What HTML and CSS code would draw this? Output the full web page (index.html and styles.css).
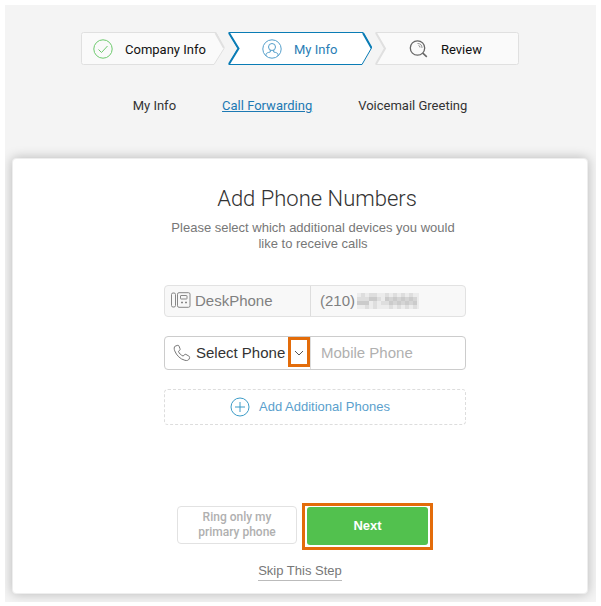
FILE: index.html
```html
<!DOCTYPE html>
<html lang="en">
  <head>
    <meta charset="UTF-8" />
    <meta name="viewport" content="width=device-width, initial-scale=1.0" />
    <title>Add Phone Numbers</title>
    <link rel="stylesheet" href="styles.css">
  </head>
  <body>
    <div class="page">
      <header class="header">
        <ol class="steps">
          <li class="step step-first">
            <svg class="step-shape" viewBox="0 0 144 33" preserveAspectRatio="none">
              <path d="M135 .5H2.500Q.5 .5 .5 2.500V30.500Q.5 32.500 2.500 32.500H133L143 16.500Z" />
              <path class="edge" d="M134.500 1L143 16" />
            </svg>
            <svg class="step-icon green" viewBox="0 0 20 20">
              <circle cx="10" cy="10" r="9.200" />
              <path d="M5.500 10.500l3 3 6-6.500" />
            </svg>
            <span>Company Info</span>
          </li>
          <li class="step step-active">
            <svg class="step-shape" viewBox="0 0 144 33" preserveAspectRatio="none">
              <path d="M.8 .5H135L143.500 16 134 32.500H.8L10 16.500Z" />
              <path class="edge" d="M1 1l9.500 15.500L1 32M135 1l8.500 15" />
            </svg>
            <svg class="step-icon blue" viewBox="0 0 20 20">
              <circle cx="10" cy="10" r="9.200" />
              <circle cx="10" cy="8" r="3.500" />
              <path d="M4 17v-1.500c0-1.500 2-2 4.300-2.500v-2M16 17v-1.500c0-1.500-2-2-4.300-2.500v-2" />
            </svg>
            <span>My Info</span>
          </li>
          <li class="step step-last">
            <svg class="step-shape" viewBox="0 0 144 33" preserveAspectRatio="none">
              <path d="M.8 .5H141.500Q143.500 .5 143.500 2.500V30.500Q143.500 32.500 141.500 32.500H.8L10 16.500Z" />
              <path class="edge" d="M1 1l9 15.500L1 32" />
            </svg>
            <svg class="step-icon dark" viewBox="0 0 20 20">
              <circle cx="8.500" cy="9" r="7.200" stroke-width="1.300" />
              <path d="M8.500 4.500c3 0 4.500 1.500 4.500 4.500M9.500 6.500q1.500 0 1.500 2" stroke-width=".7" />
              <path d="M13.800 14.200l4 3.600" stroke-width="1.600" />
            </svg>
            <span>Review</span>
          </li>
        </ol>
        <nav class="tabs">
          <a href="#my-info">My Info</a>
          <a class="current" href="#call-forwarding">Call Forwarding</a>
          <a href="#voicemail">Voicemail Greeting</a>
        </nav>
      </header>

      <main class="card">
        <form action="/">
          <div class="fields">
            <h1>Add Phone Numbers</h1>
            <p class="intro">Please select which additional devices you would like to receive calls</p>
            <div class="row row-desk">
              <div class="device">
                <svg class="desk-icon" viewBox="0 0 20 16">
                  <rect x=".5" y="1" width="4" height="14" rx="1.500" />
                  <rect x="6.500" y=".7" width="12.500" height="14.600" rx="1.500" />
                  <rect x="9.500" y="3.500" width="6.500" height="3.500" rx=".5" />
                  <path d="M10 10.500h2M14 10.500h2" stroke-width="1.500" />
                </svg>
                <span>DeskPhone</span>
              </div>
              <div class="number">
                <span>(210)</span>
                <svg class="masked" viewBox="0 0 62 16" shape-rendering="crispEdges" role="img" aria-label="Hidden number">
                  <path fill="#ececec" d="M0 0h62v16H0z" />
                  <path fill="#dedede" d="M4 0h4v4H4zM12 0h8v4h-8zM28 0h4v4h-4zM36 0h4v4h-4zM44 0h4v4h-4zM52 0h4v4h-4zM0 4h12v4H0zM20 4h4v4h-4zM8 12h4v4H8zM16 12h4v4h-4zM32 12h4v4h-4zM40 12h4v4h-4zM48 12h4v4h-4zM56 12h4v4h-4zM24 8h8v4h-8zM16 8h4v4h-4z" />
                  <path fill="#cbcbcb" d="M4 8h8v4H4zM12 4h8v4h-8zM28 4h4v4h-4zM32 8h4v4h-4zM36 4h4v4h-4zM40 8h4v4h-4zM44 4h4v4h-4zM48 8h4v4h-4zM52 4h4v4h-4zM56 8h4v4h-4zM0 8h4v4H0z" />
                  <path fill="#d5d5d5" d="M32 4h4v4h-4zM40 4h4v4h-4zM48 4h4v4h-4zM56 4h4v4h-4zM36 8h4v4h-4zM44 8h4v4h-4zM52 8h4v4h-4z" />
                </svg>
              </div>
            </div>

            <div class="row row-select">
              <div class="device">
                <svg class="phone-icon" viewBox="0 0 18 18">
                  <path d="M4.800 1.300L2.200 2.100C.9 3 1 5 1.700 6.800c1.800 4.600 5.500 8.300 10.200 9.500 2 .5 3.400.2 4.300-1.300l.4-1.500c.1-.7-.2-1-.7-1.400l-3-1.700c-.6-.3-1.100-.2-1.500.3l-1.200 1.400C7.700 11 6.300 9.500 5.400 7.400l1.300-1.100c.5-.5.5-1 .3-1.600l-1-2.600c-.2-.6-.6-.9-1.200-.8z" />
                </svg>
                <select aria-label="Phone type">
                  <option>Select Phone</option>
                  <option>Mobile Phone</option>
                </select>
                <span class="arrow">
                  <svg viewBox="0 0 10 6"><path d="M1 1l4 4 4-4" /></svg>
                </span>
              </div>
              <input type="tel" aria-label="Phone number" placeholder="Mobile Phone" />
            </div>

            <button class="add" type="button">
              <svg viewBox="0 0 20 20">
                <circle cx="10" cy="10" r="9" />
                <path d="M10 5v10M5 10h10" />
              </svg>
              <span>Add Additional Phones</span>
            </button>
          </div>

          <div class="actions">
            <button class="secondary" type="button">Ring only my primary phone</button>
            <div class="highlight">
              <button class="primary" type="submit">Next</button>
            </div>
          </div>
          <a class="skip" href="#skip">Skip This Step</a>
        </form>
      </main>
    </div>
  </body>
</html>
```
FILE: styles.css
```css
* {
  box-sizing: border-box;
}

body {
  margin: 0;
  padding: 5px 5px 4px;
  background: #fff;
  font-family: "Liberation Sans", Arial, sans-serif;
}

svg {
  display: block;
  flex: none;
  fill: none;
}

button,
input,
select {
  font-family: inherit;
}

.page {
  padding: 27px 8px 8px 7px;
  overflow: hidden;
  background: #f4f4f4;
}

.header {
  font-family: Roboto, sans-serif;
  font-size: 13px;
}

.steps {
  display: flex;
  justify-content: center;
  gap: 3px;
  margin: 0;
  padding: 0;
  list-style: none;
}

.step {
  position: relative;
  display: flex;
  align-items: center;
  gap: 12px;
  width: 144px;
  height: 33px;
  padding-left: 12px;
  color: #111;
}

.step-shape {
  position: absolute;
  inset: 0;
  width: 100%;
  height: 100%;
  fill: #fafafa;
  stroke: #e0e0e0;
}

.step-shape .edge {
  fill: none;
  stroke-width: 2;
}

.step-active {
  padding-left: 34px;
  color: #2a7db5;
}

.step-active .step-shape {
  fill: #fff;
  stroke: #0a7cb5;
}

.step-last {
  padding-left: 34px;
}

.step-icon {
  position: relative;
  width: 20px;
  height: 20px;
}

.step span {
  position: relative;
  padding-top: 2px;
}

.green {
  stroke: #6cc96c;
}

.blue {
  stroke: #559fcb;
}

.dark {
  stroke: #666;
}

.tabs {
  display: flex;
  justify-content: center;
  gap: 46px;
  padding: 33px 0 44px;
  line-height: 16px;
}

.tabs a {
  color: #333;
  text-decoration: none;
}

.tabs .current {
  color: #1c79b3;
  text-decoration: underline;
}

.card {
  padding: 27px 24px 12px;
  border: 1px solid #eee;
  border-radius: 4px;
  background: #fff;
  box-shadow: 0 0 12px rgba(0, 0, 0, 0.25);
  text-align: center;
}

form,
.fields {
  display: flex;
  flex-direction: column;
  align-items: center;
}

.fields {
  width: 100%;
  padding-left: 30px;
}

h1 {
  margin: 0;
  padding-left: 4px;
  color: #333;
  font-family: Roboto, sans-serif;
  font-size: 22px;
  font-weight: 300;
  line-height: 26px;
}

.intro {
  max-width: 300px;
  margin: 8px 0 33px;
  padding-right: 4px;
  color: #777;
  font-size: 13px;
  line-height: 16px;
}

.row {
  display: grid;
  grid-template-columns: 146px 1fr;
  width: 100%;
  max-width: 302px;
  border: 1px solid #e2e2e2;
  border-radius: 4px;
  font-size: 15px;
  text-align: left;
}

.row-desk {
  height: 32px;
  margin-bottom: 19px;
  background: #f8f8f8;
  color: #808080;
}

.device {
  position: relative;
  display: flex;
  align-items: center;
  border-right: 1px solid #ddd;
}

.row-desk .device {
  gap: 4px;
  padding: 0 0 2px 6px;
}

.desk-icon {
  width: 20px;
  height: 16px;
  stroke: #888;
}

.number {
  display: flex;
  align-items: center;
  gap: 2px;
  padding: 0 0 1px 9px;
}

.masked {
  width: 62px;
  height: 16px;
}

.row-select {
  height: 34px;
  margin-bottom: 19px;
  border-color: #ccc;
}

.phone-icon {
  width: 18px;
  height: 18px;
  margin-left: 8px;
  stroke: #777;
}

.row-select select {
  flex: 1;
  min-width: 0;
  height: 100%;
  padding: 0 0 2px 5px;
  border: 0;
  background: transparent;
  color: #333;
  font-size: 15px;
  appearance: none;
}

.arrow {
  position: absolute;
  top: 0;
  right: 0;
  display: flex;
  align-items: center;
  justify-content: center;
  width: 22px;
  height: 30px;
  padding-top: 2px;
  border: 3px solid #e36c0a;
  pointer-events: none;
}

.arrow svg {
  width: 10px;
  height: 6px;
  stroke: #555;
}

.row-select input {
  width: 100%;
  min-width: 0;
  padding: 0 10px 2px;
  border: 0;
  background: transparent;
  color: #333;
  font-size: 15px;
}

.row-select input::placeholder {
  color: #b0b0b0;
}

.add {
  display: flex;
  align-items: center;
  justify-content: center;
  gap: 9px;
  width: 100%;
  max-width: 302px;
  height: 36px;
  padding: 0 10px 1px 0;
  border: 1px dashed #ddd;
  border-radius: 4px;
  background: #fff;
  color: #5b9fcd;
  font-size: 13px;
}

.add svg {
  width: 20px;
  height: 20px;
  stroke: #3c9cc8;
}

.actions {
  display: flex;
  align-items: flex-start;
  gap: 5px;
  margin-top: 78px;
  padding-left: 10px;
}

.secondary {
  width: 120px;
  height: 38px;
  margin-top: 3px;
  padding: 0 16px;
  border: 1px solid #e2e2e2;
  border-radius: 4px;
  background: #fff;
  color: #b0b0b0;
  font-family: Roboto, sans-serif;
  font-size: 12px;
  font-weight: 500;
  line-height: 15px;
}

.highlight {
  padding: 1px 2px 2px;
  border: 3px solid #e36c0a;
}

.primary {
  display: block;
  width: 121px;
  height: 38px;
  padding-bottom: 3px;
  border: 0;
  border-radius: 3px;
  background: #52c14e;
  color: #fff;
  font-size: 13px;
  font-weight: bold;
}

.skip {
  margin-top: 12px;
  padding-bottom: 1px;
  border-bottom: 1px solid #bbb;
  color: #777;
  font-size: 13px;
  line-height: 17px;
  text-decoration: none;
}
```
